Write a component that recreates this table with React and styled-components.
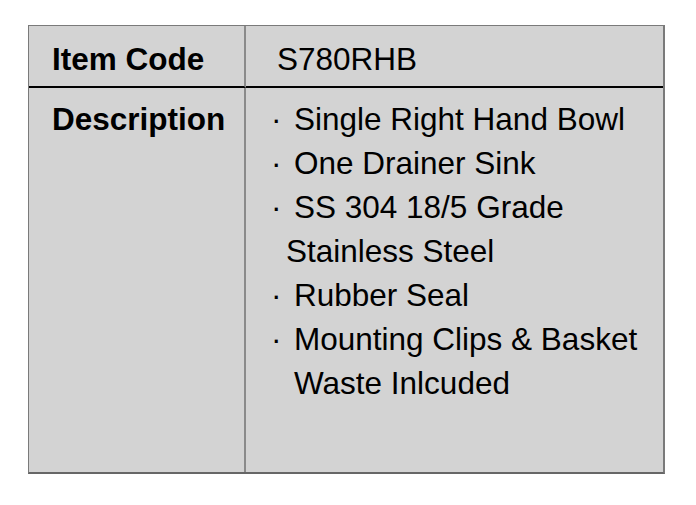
import React from "react";
import styled, { createGlobalStyle } from "styled-components";

const Global = createGlobalStyle`
  html, body { margin: 0; padding: 0; background: #fff; }
  body { font-family: "Liberation Sans", Arial, sans-serif; color: #000; }
`;

const Page = styled.div`
  padding: 25px 0 0 28px;
`;

const Table = styled.div`
  width: 637px;
  height: 449px;
  box-sizing: border-box;
  display: grid;
  grid-template-columns: 217px 1fr;
  grid-template-rows: 62px 1fr;
  background: #d3d3d3;
  border: 1px solid #7a7a7a;
  border-right-width: 2px;
  border-bottom-width: 2px;
  border-bottom-color: #666;
`;

const Cell = styled.div`
  box-sizing: border-box;
  border-right: ${(p) => (p.$left ? "2px solid #8a8a8a" : "none")};
  border-bottom: ${(p) => (p.$top ? "2px solid #000" : "none")};
  padding: ${(p) => p.$pad};
  font-size: 31.5px;
  font-weight: ${(p) => (p.$bold ? 700 : 400)};
  line-height: 44px;
`;

const List = styled.div`
  display: flex;
  flex-direction: column;
`;

const Line = styled.div`
  white-space: pre;
  padding-left: ${(p) => p.$indent || 0}px;
`;

const Bullet = styled.span`
  display: inline-block;
  width: 23px;
`;

const items = [
  ["Single Right Hand Bowl", true, 0],
  ["One Drainer Sink", true, 0],
  ["SS 304 18/5 Grade", true, 0],
  ["Stainless Steel", false, 15],
  ["Rubber Seal", true, 0],
  ["Mounting Clips & Basket", true, 0],
  ["Waste Inlcuded", false, 23],
];

export default function App() {
  return (
    <>
      <Global />
      <Page>
        <Table>
          <Cell $left $top $bold $pad="11px 0 0 23px">Item Code</Cell>
          <Cell $top $pad="11px 0 0 31px">S780RHB</Cell>
          <Cell $left $bold $pad="9px 0 0 23px">Description</Cell>
          <Cell $pad="9px 0 0 25px">
            <List>
              {items.map(([t, b, i], k) => (
                <Line key={k} $indent={i}>
                  {b && <Bullet>·</Bullet>}
                  {t}
                </Line>
              ))}
            </List>
          </Cell>
        </Table>
      </Page>
    </>
  );
}
